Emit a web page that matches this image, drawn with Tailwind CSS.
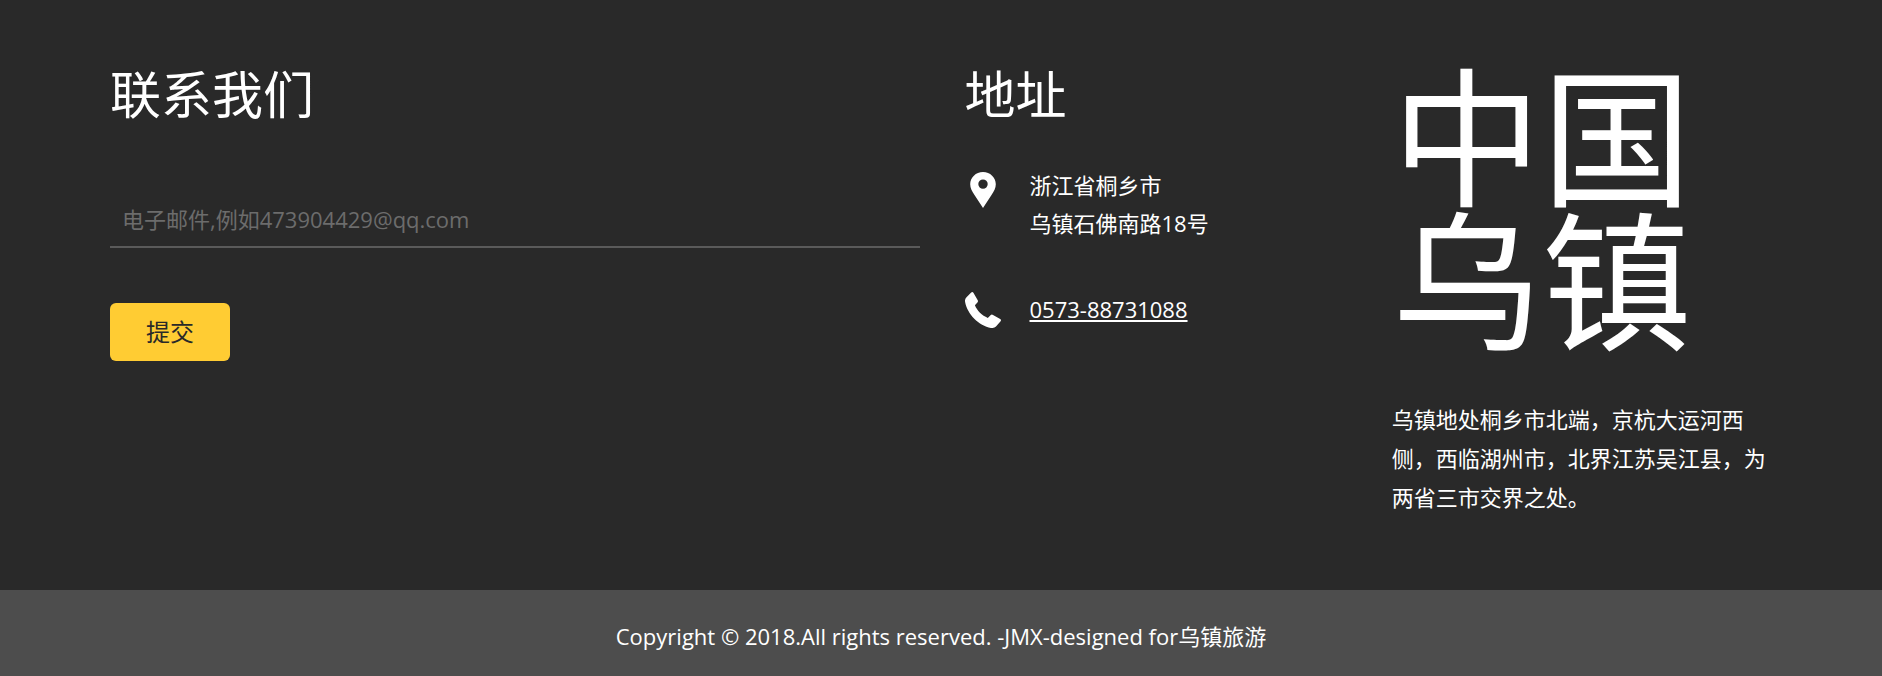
<!DOCTYPE html>
<html lang="zh-CN">
<head>
<meta charset="utf-8">
<meta name="viewport" content="width=device-width, initial-scale=1">
<title>乌镇旅游</title>
<script src="https://cdn.jsdelivr.net/npm/@tailwindcss/browser@4"></script>
</head>
<body class="flex min-h-screen flex-col bg-[#292929] font-['Open_Sans','Noto_Sans_CJK_SC',sans-serif] text-[22px] text-white">
<main class="grid grow grid-cols-1 gap-x-[45px] gap-y-12 px-6 pt-[67px] pb-16 lg:grid-cols-4 lg:pr-[108px] lg:pl-[110px]">
  <section class="lg:col-span-2">
    <h2 class="text-[51px] leading-[54px]">联系我们</h2>
    <form class="mt-[72px]">
      <input type="email" aria-label="电子邮件" placeholder="电子邮件,例如473904429@qq.com" class="block h-[55px] w-full border-b-2 border-[#5a5a5a] bg-transparent px-3 pb-0.5 outline-none placeholder:text-[#6c6c6c]">
      <button type="button" class="mt-[55px] h-[58px] w-[120px] rounded-md bg-[#ffcc33] text-2xl text-[#292929]">提交</button>
    </form>
  </section>
  <section>
    <h2 class="text-[51px] leading-[54px]">地址</h2>
    <div class="mt-[45px] flex gap-[29px]">
      <svg class="mt-1.5 size-9 shrink-0" viewBox="0 0 36 36" fill="#fff" aria-hidden="true"><path fill-rule="evenodd" d="M18 0C10.800 0 5.200 5.600 5.200 12.300C5.200 16.200 7 19.500 9.500 23L18 36L26.500 23C29 19.500 30.800 16.200 30.800 12.300C30.800 5.600 25.200 0 18 0ZM18 7.400A4.700 4.700 0 1 1 18 16.800A4.700 4.700 0 1 1 18 7.400Z"/></svg>
      <address class="leading-[38px] not-italic">浙江省桐乡市<br>乌镇石佛南路18号</address>
    </div>
    <div class="mt-12 flex gap-[29px]">
      <svg class="mt-0.5 size-9 shrink-0" viewBox="0 0 36 36" fill="#fff" aria-hidden="true"><path d="M6.200 .5Q7.500 -.5 8.400 .8L12.600 8Q13.400 9.400 12.400 10.500L9.900 13.300C12 18.500 17 23.600 22.800 25.900L25.500 23.200Q26.700 22.200 28 22.900L35.200 27.100Q36.500 28 35.600 29.300L31 34.500Q29.200 36.400 26 35.900C14 34 2.200 22 .1 10Q-.4 7 1.500 5.200Z"/></svg>
      <a href="tel:0573-88731088" class="leading-[38px] underline decoration-2 underline-offset-2">0573-88731088</a>
    </div>
  </section>
  <section class="-mt-0.5">
    <h1 class="text-[150px] leading-[144px]">中国<br>乌镇</h1>
    <p class="mt-[47px] leading-[39px]">乌镇地处桐乡市北端，京杭大运河西侧，西临湖州市，北界江苏吴江县，为两省三市交界之处。</p>
  </section>
</main>
<footer class="bg-[#4d4d4d] px-6 pt-[27px] pb-[21px] text-center leading-[38px]">
  <p>Copyright © 2018.All rights reserved. -JMX-designed for乌镇旅游</p>
</footer>
</body>
</html>
